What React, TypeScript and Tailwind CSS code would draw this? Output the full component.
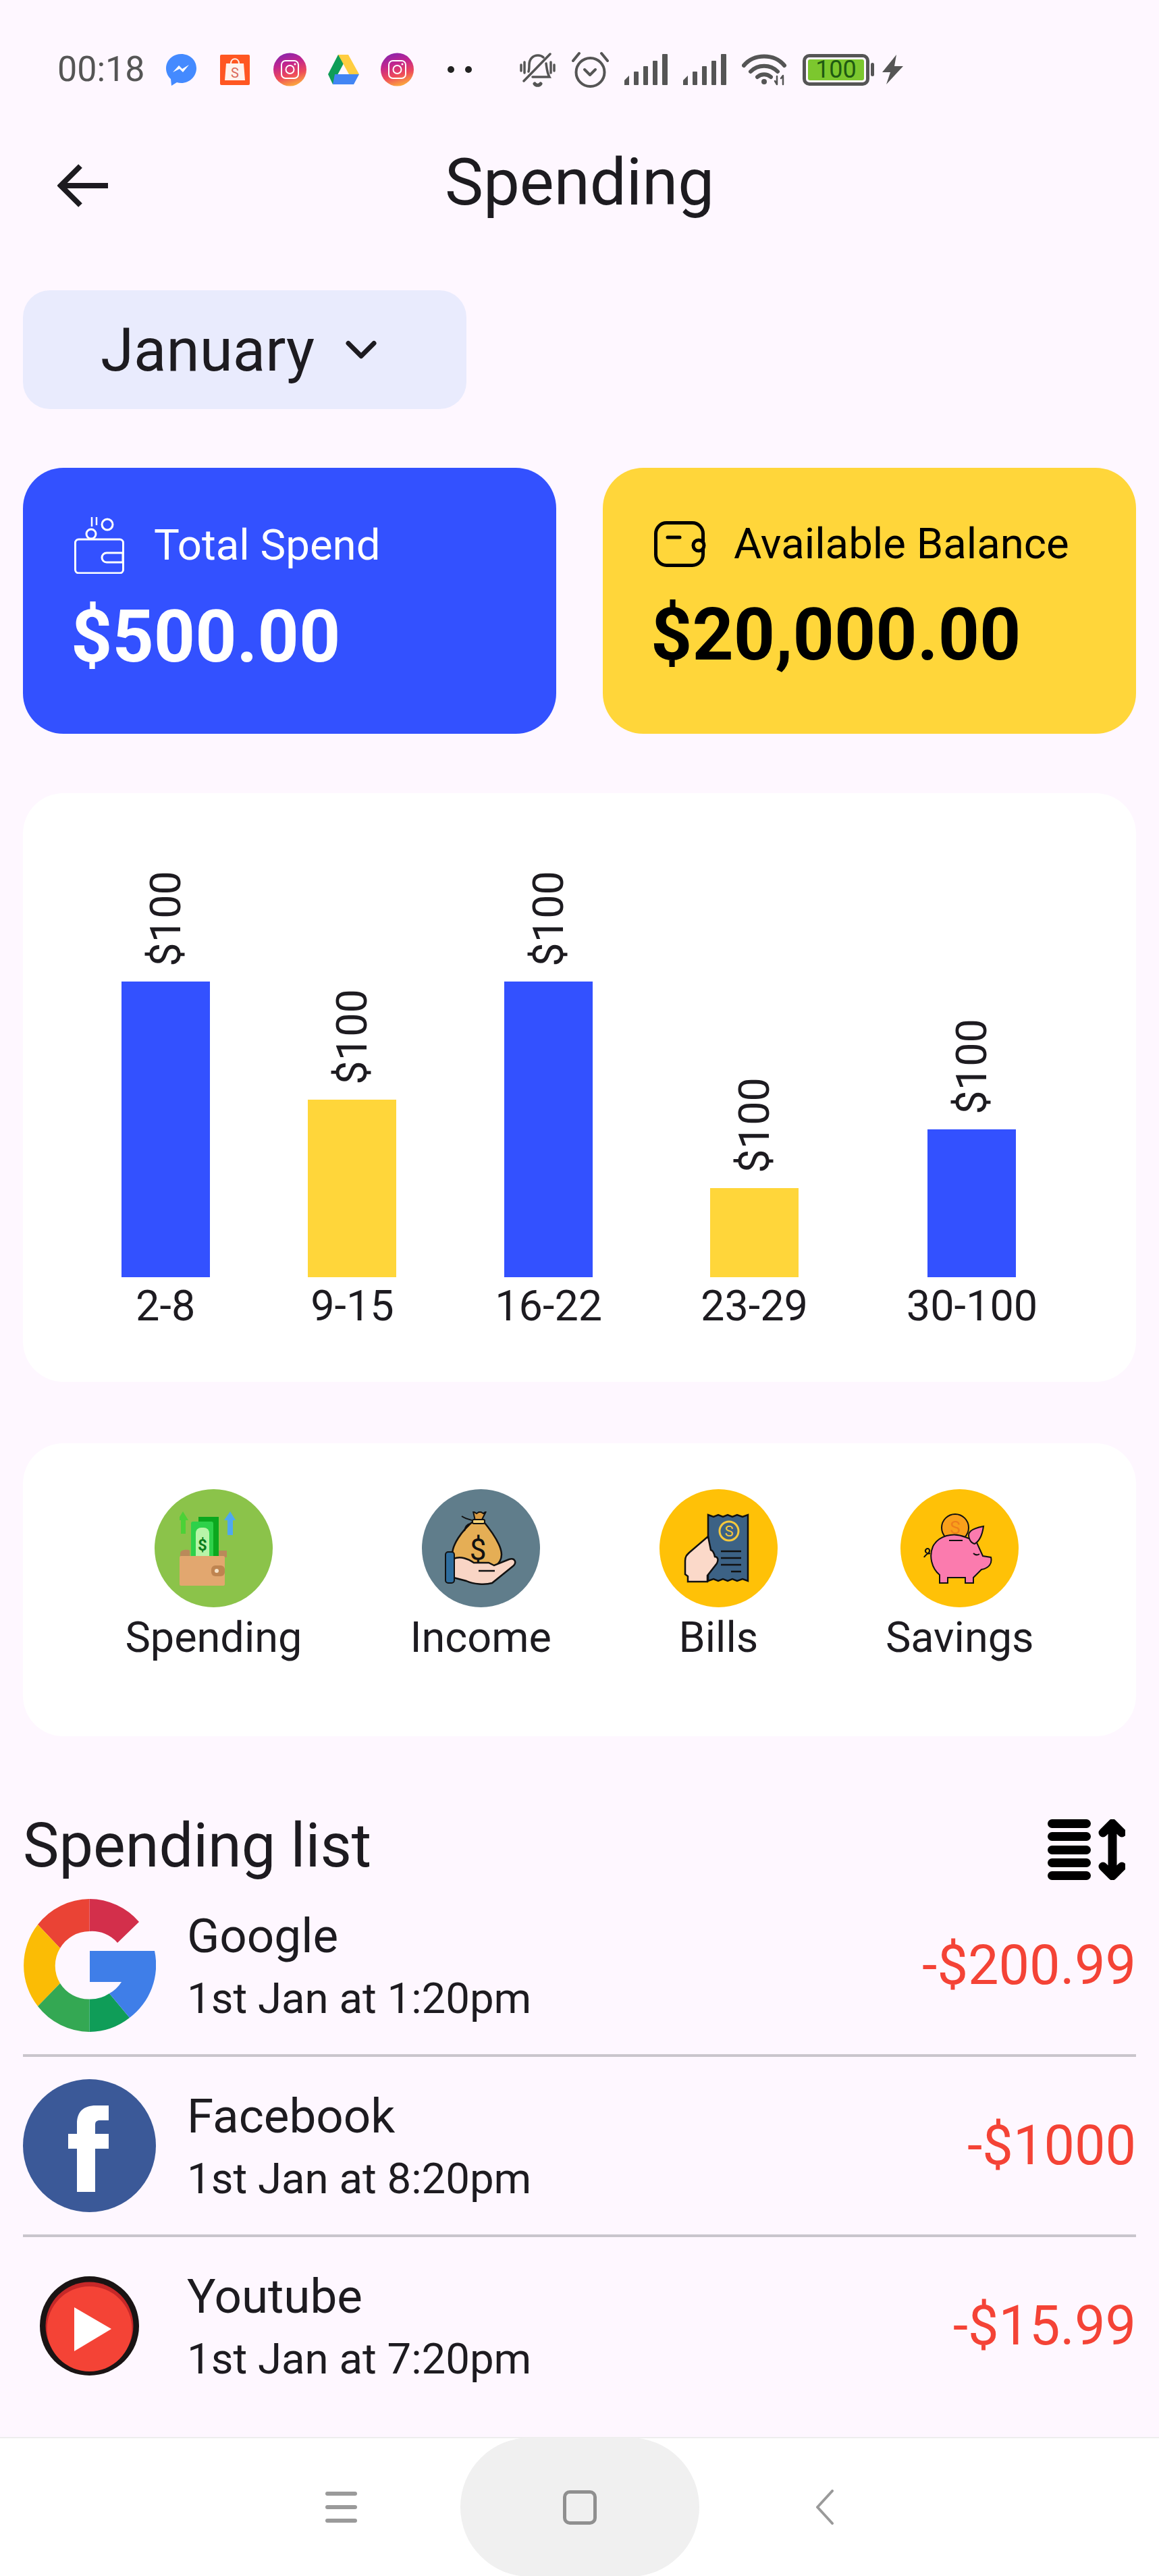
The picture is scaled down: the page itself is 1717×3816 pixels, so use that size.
import { ChevronDown } from "lucide-react";

function Messenger() {
  return (
    <svg width="45" height="47" viewBox="0 0 45 47">
      <path d="M22.5 0C10 0 0 9 0 21c0 6.500 2.700 12 7 16l1 10 8-5c2 .6 4.300 1 6.500 1C35 43 45 33 45 21S35 0 22.500 0Z" fill="#448AFF" />
      <path d="M10 27l9-10 5 5 10-6-9 11-5-5Z" fill="#fff" />
    </svg>
  );
}

function Shopee() {
  return (
    <svg width="44" height="45" viewBox="0 0 44 45">
      <rect width="44" height="45" rx="2" fill="#FF5722" />
      <path d="M9 13h26l2 25H7Z" fill="#FFF3EE" />
      <path d="M16 13c0-9 12-9 12 0" fill="none" stroke="#FFF3EE" strokeWidth="2" />
      <text x="22" y="34" textAnchor="middle" fontSize="20" fill="#D9695A" fontFamily="Roboto">S</text>
    </svg>
  );
}

function Instagram({ id }: { id: string }) {
  return (
    <svg width="49" height="50" viewBox="0 0 49 50">
      <defs>
        <linearGradient id={id} x1="0.7" y1="1" x2="0.4" y2="0">
          <stop offset="0" stopColor="#FDB43A" />
          <stop offset="0.35" stopColor="#EE4A5A" />
          <stop offset="0.7" stopColor="#C1258F" />
          <stop offset="1" stopColor="#8E24AA" />
        </linearGradient>
      </defs>
      <circle cx="24.500" cy="25" r="24.500" fill={`url(#${id})`} />
      <rect x="12" y="12" width="25" height="26" rx="6" fill="none" stroke="#fff" strokeWidth="2" />
      <circle cx="24.500" cy="25" r="6" fill="none" stroke="#fff" strokeWidth="2" />
      <circle cx="32" cy="17" r="1.500" fill="#fff" />
    </svg>
  );
}

function Drive() {
  return (
    <svg width="46" height="44" viewBox="0 0 46 44">
      <path d="M15 0h15L15 28 7 44 0 29Z" fill="#0F9D58" />
      <path d="M15 0h15l16 29H31Z" fill="#FFCD40" />
      <path d="M10 29h36l-8 15H7Z" fill="#4285F4" />
    </svg>
  );
}

function BellOff() {
  return (
    <svg width="55" height="51" viewBox="0 0 55 51" fill="none" stroke="#555" strokeWidth="3.500" strokeLinecap="round">
      <path d="M14 28c1-3 1-6 1-10C15 10 20 4 28 4c3 0 6 1 8 3M40 16c1 6 1 13 5 20H20" />
      <path d="M7 42 46 2" />
      <path d="M3 18v9M8 14v16M47 14v16M52 18v9" />
      <path d="M23 46c2 3 7 3 9 0" strokeWidth="5" />
    </svg>
  );
}

function Alarm() {
  return (
    <svg width="55" height="54" viewBox="0 0 55 54" fill="none" stroke="#555" strokeWidth="4" strokeLinecap="round">
      <ellipse cx="27.500" cy="31" rx="21" ry="21" />
      <path d="M19 27l8 8 8-8" strokeLinejoin="round" />
      <path d="M2 14 11 3M53 14 44 3" />
    </svg>
  );
}

function Signal() {
  return (
    <svg width="64" height="46" viewBox="0 0 64 46" fill="#555">
      <path d="M0 39 7 32v14H0Z" />
      <rect x="14" y="26" width="7" height="20" rx="1" />
      <rect x="28" y="18" width="7" height="28" rx="1" />
      <rect x="42" y="10" width="7" height="36" rx="1" />
      <rect x="56" y="0" width="8" height="46" rx="1" />
    </svg>
  );
}

function Wifi() {
  return (
    <svg width="67" height="48" viewBox="0 0 67 48" fill="none" stroke="#555" strokeWidth="6" strokeLinecap="round">
      <path d="M3 18C18 0 48 0 63 18" />
      <path d="M13 27c11-11 29-11 40 0" />
      <path d="M23 35c6-5 14-5 20 0" />
      <circle cx="33" cy="42" r="4" fill="#555" stroke="none" />
      <path d="M52 34v12M61 34v12M49 41l3 5M58 37l3-4" strokeWidth="2.500" />
    </svg>
  );
}

function Battery() {
  return (
    <div className="flex items-center gap-[2px]">
      <div className="flex h-[47px] w-[99px] items-center justify-center rounded-[10px] border-[5px] border-[#555555] p-[3px]">
        <div className="flex h-full w-full items-center justify-center rounded-[3px] bg-[#7CC72E] text-[36px] leading-none text-[#1F5A12]">
          100
        </div>
      </div>
      <div className="h-[20px] w-[5px] rounded-sm bg-[#555555]" />
    </div>
  );
}

function Bolt() {
  return (
    <svg width="31" height="44" viewBox="0 0 31 44" fill="#555">
      <path d="M21 0 0 26h12L6 44 31 17H18Z" />
    </svg>
  );
}

function WalletCoins() {
  return (
    <svg width="76" height="85" viewBox="0 0 76 85" fill="none" stroke="#fff" strokeWidth="3">
      <rect x="1.500" y="34" width="71" height="50" rx="5" />
      <path d="M48 54h24v14H48a7 7 0 0 1 0-14Z" />
      <circle cx="25" cy="26" r="7" />
      <circle cx="49" cy="12" r="8" />
      <path d="M26 1v14M33 1v12" strokeWidth="2.500" />
    </svg>
  );
}

function WalletOutline() {
  return (
    <svg width="77" height="68" viewBox="0 0 77 68" fill="none" stroke="#000" strokeWidth="5">
      <rect x="2.500" y="2.500" width="70" height="63" rx="16" />
      <path d="M20 24h18" strokeLinecap="round" />
      <circle cx="66" cy="36" r="8" fill="#FFD63A" />
    </svg>
  );
}

function SpendingArt() {
  return (
    <svg width="100" height="110" viewBox="0 0 100 110">
      <path d="M5 0 13 13H9v20H2V13h-5Z" fill="#4CD137" />
      <path d="M75 0 83 13h-4v22h-8V13h-5Z" fill="#4FA8F0" />
      <rect x="28" y="8" width="30" height="70" fill="#0BA81E" />
      <rect x="17" y="15" width="33" height="65" rx="3" fill="#2ED14A" />
      <rect x="24" y="24" width="20" height="50" rx="8" fill="#B8F5A8" />
      <text x="34" y="58" textAnchor="middle" fontSize="24" fontWeight="700" fill="#0A7D1C" fontFamily="Roboto">$</text>
      <path d="M1 62c0-6 12-6 14-4v10H1ZM58 58h12v10H58Z" fill="#B98A5A" />
      <rect x="0" y="66" width="67" height="44" rx="2" fill="#E2A76F" />
      <rect x="47" y="80" width="20" height="16" rx="6" fill="#BF8450" />
      <circle cx="55" cy="88" r="3" fill="#F5E2C8" />
    </svg>
  );
}

function IncomeArt() {
  return (
    <svg width="106" height="110" viewBox="0 0 106 110">
      <path d="M45 12c-22 18-34 38-34 52 0 14 18 25 38 25s35-11 35-25C84 50 70 30 55 12Z" fill="#E5AE55" stroke="#111" strokeWidth="2.500" />
      <path d="M42 0l5 3 5-3 5 3 4-3-7 14H45Z" fill="#D99C45" stroke="#111" strokeWidth="2" />
      <rect x="41" y="12" width="18" height="6" rx="2" fill="#F4D27A" stroke="#111" strokeWidth="2" />
      <path d="M40 13C32 11 28 9 25 7M38 18c-5 1-8 4-9 11" fill="none" stroke="#111" strokeWidth="2" />
      <text x="49" y="72" textAnchor="middle" fontSize="44" fill="#111" fontFamily="Roboto">$</text>
      <path d="M13 70c10-4 22 0 30 6l22 0 8 4 22-9c9-3 12 5 6 10L70 106c-10 3-28 2-38-3L13 98Z" fill="#F9D5C5" stroke="#111" strokeWidth="2.500" />
      <path d="M50 88h24" stroke="#111" strokeWidth="2.500" />
      <rect x="1" y="60" width="13" height="46" rx="4" fill="#2E6D9E" stroke="#111" strokeWidth="2" />
    </svg>
  );
}

function BillsArt() {
  return (
    <svg width="102" height="104" viewBox="0 0 102 104">
      <path d="M36 2l8 3 7-3 7 3 7-3 7 3 7-3 8 3 8-3v98l-8-3-8 3-7-3-7 3-7-3-7 3-7-3-8 3Z" fill="#3C6285" stroke="#111" strokeWidth="2.500" />
      <circle cx="67" cy="26" r="14" fill="#3C6285" stroke="#F6C93C" strokeWidth="3" />
      <text x="67" y="34" textAnchor="middle" fontSize="22" fill="#F6C93C" fontFamily="Roboto">S</text>
      <path d="M55 56h30M55 66h30M55 76h30M70 86h15" stroke="#111" strokeWidth="2.500" />
      <path d="M36 34 8 58c-4 4-6 6-6 12v20l4 3v8h29V92l14-18c3-6 1-10-3-10-1-5-3-9-6-10Z" fill="#FBD9C9" stroke="#111" strokeWidth="2.500" />
    </svg>
  );
}

function SavingsArt() {
  return (
    <svg width="112" height="106" viewBox="0 0 112 106">
      <circle cx="49" cy="22" r="20" fill="#F9A01B" stroke="#111" strokeWidth="2" />
      <text x="49" y="31" textAnchor="middle" fontSize="26" fill="#EE7F1B" fontFamily="Roboto">S</text>
      <path d="M16 50c8-16 30-22 48-14l16 6 10 22 12 2c2 8-2 16-14 18L76 96v8H64v-8H38v8H26V92C14 82 10 64 16 50Z" fill="#FB7BAE" stroke="#111" strokeWidth="2" />
      <path d="M70 38c-3-8 0-14 21-18-2 14-6 22-13 26-4-1-7-4-8-8Z" fill="#FB7BAE" stroke="#111" strokeWidth="2" />
      <path d="M12 60c-5 2-9-3-6-6s7 1 4 5c-2 2-6 4-7 7" fill="none" stroke="#111" strokeWidth="2" />
      <path d="M76 60c3 3 6 3 9 1M40 41h20" fill="none" stroke="#111" strokeWidth="2" />
    </svg>
  );
}

function GoogleLogo() {
  return (
    <svg width="197" height="197" viewBox="0 0 197 197">
      <path d="M98.500 0A98 98 0 0 1 172 34L140 65A50 50 0 0 0 98.500 48Z" fill="#D32F4B" />
      <path d="M98.500 0A98 98 0 0 0 22 38L55 73A50 50 0 0 1 98.500 48Z" fill="#EA4335" />
      <path d="M22 38A98 98 0 0 0 22 159L55 125A50 50 0 0 1 55 73Z" fill="#FBBC05" />
      <path d="M22 159A98 98 0 0 0 98.500 197V148.500A50 50 0 0 1 55 125Z" fill="#34A853" />
      <path d="M98.500 197A98 98 0 0 0 158 176L128 140A50 50 0 0 1 98.500 148.500Z" fill="#0F9D58" />
      <path d="M99 77H195A98 98 0 0 1 158 176L128 140A50 50 0 0 0 146 123H99Z" fill="#3F7EE8" />
    </svg>
  );
}

function FacebookLogo() {
  return (
    <svg width="197" height="197" viewBox="0 0 197 197">
      <circle cx="98.500" cy="98.500" r="98.500" fill="#3B5998" />
      <path d="M80 167V103H67V81H80V66C80 48 90 39 108 39H127V61H114C109 61 107 63 107 68V81H127V103H107V167Z" fill="#fff" />
    </svg>
  );
}

function YoutubeLogo() {
  return (
    <svg width="147" height="147" viewBox="0 0 147 147">
      <circle cx="73.500" cy="73.500" r="73.500" fill="#1A1414" />
      <circle cx="73.500" cy="73.500" r="65" fill="#C62828" />
      <circle cx="73.500" cy="78" r="63" fill="#F44336" />
      <path d="M51 46 106 78 51 111Z" fill="#fff" />
    </svg>
  );
}

function SortIcon() {
  return (
    <svg width="115" height="90" viewBox="0 0 115 90">
      <rect x="0" y="0" width="64" height="13" rx="6.500" />
      <rect x="0" y="19" width="64" height="13" rx="6.500" />
      <rect x="0" y="39" width="64" height="13" rx="6.500" />
      <rect x="0" y="58" width="64" height="13" rx="6.500" />
      <rect x="0" y="77" width="64" height="13" rx="6.500" />
      <path d="M96 6V84M82 20 96 6 110 20M82 70 96 84 110 70" fill="none" stroke="#000" strokeWidth="13" strokeLinecap="round" strokeLinejoin="round" />
    </svg>
  );
}

const bars = [
  { range: "2-8", height: "h-[438px]", color: "bg-[#3351FF]" },
  { range: "9-15", height: "h-[263px]", color: "bg-[#FFD63A]" },
  { range: "16-22", height: "h-[438px]", color: "bg-[#3351FF]" },
  { range: "23-29", height: "h-[132px]", color: "bg-[#FFD63A]" },
  { range: "30-100", height: "h-[219px]", color: "bg-[#3351FF]" },
];

const shortcuts = [
  { label: "Spending", circle: "bg-[#8BC34A]", art: <SpendingArt /> },
  { label: "Income", circle: "bg-[#607D8B]", art: <IncomeArt /> },
  { label: "Bills", circle: "bg-[#FFC107]", art: <BillsArt /> },
  { label: "Savings", circle: "bg-[#FFC107]", art: <SavingsArt /> },
];

const spendings = [
  { name: "Google", date: "1st Jan at 1:20pm", amount: "-$200.99", logo: <GoogleLogo /> },
  { name: "Facebook", date: "1st Jan at 8:20pm", amount: "-$1000", logo: <FacebookLogo /> },
  { name: "Youtube", date: "1st Jan at 7:20pm", amount: "-$15.99", logo: <YoutubeLogo /> },
];

export default function App() {
  return (
    <div className="flex min-h-[3816px] flex-col bg-[#FEF7FF] font-['Roboto',sans-serif] text-[#1D1B20]">
      {/* Status bar */}
      <div className="mt-[76px] flex h-[54px] items-center pl-[85px]">
        <span className="w-[132px] text-[52px] leading-none text-[#555555]">00:18</span>
        <div className="ml-[29px] flex items-center gap-[35px]">
          <Messenger />
          <Shopee />
          <div className="flex items-center gap-[32px]">
            <Instagram id="ig-a" />
            <Drive />
            <Instagram id="ig-b" />
          </div>
        </div>
        <div className="ml-[50px] flex gap-[16px]">
          <div className="h-[10px] w-[10px] rounded-full bg-[#222222]" />
          <div className="h-[10px] w-[10px] rounded-full bg-[#222222]" />
        </div>
        <div className="ml-[70px] flex items-center gap-[23px]">
          <BellOff />
          <Alarm />
          <Signal />
          <Signal />
          <Wifi />
          <div className="flex items-center gap-[12px]">
            <Battery />
            <Bolt />
          </div>
        </div>
      </div>

      {/* App bar */}
      <div className="relative mt-[40px] flex h-[210px] items-center justify-center">
        <svg className="absolute left-[85px] top-[73px]" width="75" height="64" viewBox="0 0 75 64" fill="none" stroke="#1D1B20" strokeWidth="8">
          <path d="M75 32H6M34 3 5 32 34 61" />
        </svg>
        <h1 className="-mt-[10px] text-[96px] font-normal leading-none">Spending</h1>
      </div>

      <div className="flex flex-1 flex-col px-[34px]">
        {/* Month picker */}
        <div className="mt-[50px] flex h-[176px] w-[657px] items-center gap-[31px] rounded-[40px] bg-[#E9EBFD] pl-[115px]">
          <span className="text-[89px] leading-none">January</span>
          <ChevronDown size={76} strokeWidth={2.2} className="text-[#1D1B20]" />
        </div>

        {/* Balance cards */}
        <div className="mt-[87px] flex justify-between">
          <div className="h-[394px] w-[790px] rounded-[60px] bg-[#3351FF] pl-[76px] pt-[72px] text-white">
            <div className="flex items-center gap-[42px]">
              <WalletCoins />
              <span className="text-[63.500px] leading-none">Total Spend</span>
            </div>
            <div className="-ml-[5px] mt-[40px] text-[107px] font-bold leading-none">$500.00</div>
          </div>
          <div className="h-[394px] w-[790px] rounded-[60px] bg-[#FFD63A] pl-[76px] pt-[79px] text-black">
            <div className="flex items-center gap-[41px]">
              <WalletOutline />
              <span className="text-[63.500px] leading-none">Available Balance</span>
            </div>
            <div className="-ml-[5px] mt-[47px] text-[107px] font-bold leading-none">$20,000.00</div>
          </div>
        </div>

        {/* Chart */}
        <div className="mt-[88px] flex h-[872px] items-end justify-evenly rounded-[60px] bg-white pb-[76px]">
          {bars.map((bar) => (
            <div key={bar.range} className="flex flex-col items-center">
              <span className="rotate-180 text-[63px] leading-none [writing-mode:vertical-rl]">$100</span>
              <div className={`mt-[22px] w-[131px] ${bar.height} ${bar.color}`} />
              <span className="mt-[7px] text-[63px] leading-[72px]">{bar.range}</span>
            </div>
          ))}
        </div>

        {/* Shortcuts */}
        <div className="mt-[91px] flex h-[434px] justify-center gap-[160px] rounded-[60px] bg-white pt-[68px]">
          {shortcuts.map((item) => (
            <div key={item.label} className="flex flex-col items-center">
              <div className={`flex h-[175px] w-[175px] items-center justify-center rounded-full ${item.circle}`}>
                {item.art}
              </div>
              <span className="mt-[9px] text-[63px] leading-[72px]">{item.label}</span>
            </div>
          ))}
        </div>

        {/* Spending list */}
        <div className="mt-[123px] flex h-[90px] items-center justify-between pr-[16px]">
          <h2 className="-mt-[10px] text-[90px] font-normal leading-none">Spending list</h2>
          <SortIcon />
        </div>
        <div className="mt-[28px] flex flex-col">
          {spendings.map((item, i) => (
            <div key={item.name} className={i < 2 ? "mb-[33px] border-b-4 border-[#C9C5CC] pb-[33px]" : ""}>
              <div className="flex h-[197px] items-center">
                <div className="flex w-[197px] items-center justify-center">{item.logo}</div>
                <div className="ml-[46px] flex-1">
                  <div className="text-[71px] leading-[84px]">{item.name}</div>
                  <div className="mt-[15px] text-[63.500px] leading-[72px]">{item.date}</div>
                </div>
                <span className="text-[81px] leading-none text-[#F44336]">{item.amount}</span>
              </div>
            </div>
          ))}
        </div>
      </div>

      {/* Navigation bar */}
      <div className="flex h-[206px] items-center justify-center border-t-2 border-[#EEEEEE] bg-white">
        <svg width="47" height="46" viewBox="0 0 47 46" fill="#9A9A9A">
          <rect y="0" width="47" height="6" rx="3" />
          <rect y="20" width="47" height="6" rx="3" />
          <rect y="40" width="47" height="6" rx="3" />
        </svg>
        <div className="ml-[153px] mr-[172px] flex h-[206px] w-[354px] items-center justify-center rounded-full bg-[#F0F0F0]">
          <div className="h-[51px] w-[50px] rounded-[10px] border-[5px] border-[#8F8F8F]" />
        </div>
        <svg width="27" height="52" viewBox="0 0 27 52" fill="none" stroke="#9A9A9A" strokeWidth="4" strokeLinecap="round" strokeLinejoin="round">
          <path d="M25 2 3 26 25 50" />
        </svg>
      </div>
    </div>
  );
}
